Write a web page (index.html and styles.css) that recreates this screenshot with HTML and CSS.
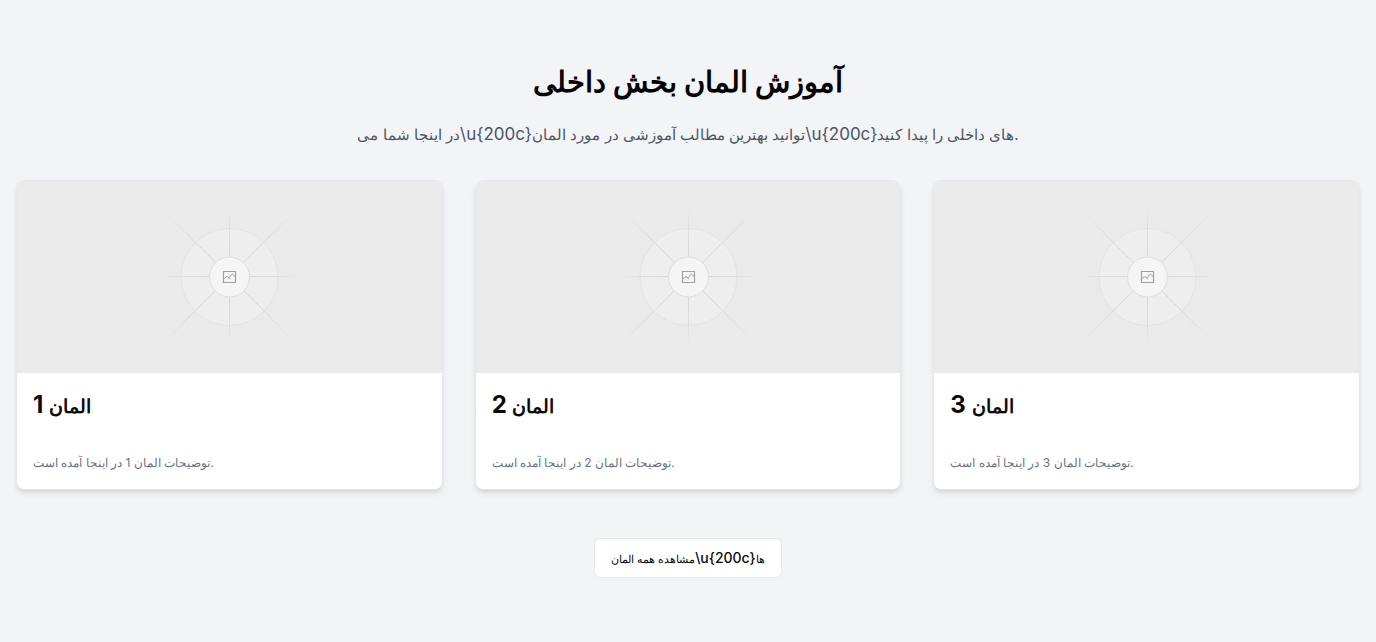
FILE: index.html
```
<!DOCTYPE html>
<html lang="fa" dir="ltr">
<head>
<meta charset="utf-8">
<meta name="viewport" content="width=device-width, initial-scale=1">
<title>آموزش المان بخش داخلی</title>
<link rel="stylesheet" href="styles.css">
</head>
<body>
<svg class="defs" aria-hidden="true">
  <defs>
    <radialGradient id="ray" gradientUnits="userSpaceOnUse" cx="80.5" cy="79.5" r="96">
      <stop offset="0.25" stop-color="#d6d6d6"/>
      <stop offset="0.6" stop-color="#dadada"/>
      <stop offset="1" stop-color="#eaeaea"/>
    </radialGradient>
    <radialGradient id="axis" gradientUnits="userSpaceOnUse" cx="80.5" cy="79.5" r="68">
      <stop offset="0.3" stop-color="#d8d8d8"/>
      <stop offset="0.7" stop-color="#dcdcdc"/>
      <stop offset="1" stop-color="#eaeaea"/>
    </radialGradient>
    <symbol id="placeholder" viewBox="0 0 160 160">
      <circle cx="80.5" cy="80" r="48.5" fill="#eeeeee" stroke="#e3e3e3"/>
      <path d="M80.5 12v135M13 79.5h135" stroke="url(#axis)"/>
      <path d="M17 16l129 129M144 16L15 145" stroke="url(#ray)"/>
      <circle cx="80.5" cy="80" r="20" fill="#f5f5f5" stroke="#dedede"/>
      <g fill="none" stroke="#a0a0a0">
        <path d="M74.5 74.5h12v11h-12z" stroke-width="1.2"/>
        <path d="M74.700 82l2.300-2q1.200-.8 2.200.2l1.800 2.100M79 80.500l1 .3 2.600-3.200q.8-.8 1.600 0l2.300 2.400"/>
      </g>
    </symbol>
  </defs>
</svg>
<section class="section">
  <header class="intro">
    <h2 class="title">آموزش المان بخش داخلی</h2>
    <p class="lead"><span class="lead-fa">در اینجا شما می</span>\u{200c}<span class="lead-fa">توانید بهترین مطالب آموزشی در مورد المان</span>\u{200c}<span class="lead-fa">های داخلی را پیدا کنید.</span></p>
  </header>
  <div class="cards">
    <article class="card">
      <div class="media"><svg class="art" role="img" aria-label="المان 1"><use href="#placeholder"/></svg></div>
      <div class="content">
        <h3 class="name"><span class="name-fa">المان</span> 1</h3>
        <p class="desc">توضیحات المان 1 در اینجا آمده است.</p>
      </div>
    </article>
    <article class="card">
      <div class="media"><svg class="art" role="img" aria-label="المان 2"><use href="#placeholder"/></svg></div>
      <div class="content">
        <h3 class="name"><span class="name-fa">المان</span> 2</h3>
        <p class="desc">توضیحات المان 2 در اینجا آمده است.</p>
      </div>
    </article>
    <article class="card">
      <div class="media"><svg class="art" role="img" aria-label="المان 3"><use href="#placeholder"/></svg></div>
      <div class="content">
        <h3 class="name"><span class="name-fa">المان</span> 3</h3>
        <p class="desc">توضیحات المان 3 در اینجا آمده است.</p>
      </div>
    </article>
  </div>
  <div class="actions">
    <button class="button" type="button"><span class="button-fa">مشاهده همه المان</span>\u{200c}<span class="button-fa">ها</span></button>
  </div>
</section>
</body>
</html>
```
FILE: styles.css
```
*, *::before, *::after { box-sizing: border-box; }
body {
  margin: 0;
  background: #f3f4f6;
  color: #0a0a0a;
  font-family: Inter, "Liberation Sans", Arial, sans-serif;
}
h2, h3, p { margin: 0; }
.defs { position: absolute; width: 0; height: 0; }
.section { padding: 64px 16px; }
.intro {
  display: flex;
  flex-direction: column;
  gap: 20px;
  margin-bottom: 32px;
  text-align: center;
}
.title { font-size: 29px; line-height: 36px; font-weight: 700; color: #000; }
.lead { font-size: 17px; line-height: 28px; color: #4b5563; }
.lead-fa { font-size: 15px; line-height: 1; }
.cards {
  display: grid;
  grid-template-columns: repeat(3, minmax(0, 1fr));
  gap: 32px;
}
.card {
  overflow: hidden;
  border: 1px solid #e5e7eb;
  border-radius: 8px;
  background: #fff;
  box-shadow: 0 4px 6px -1px rgba(0, 0, 0, .1), 0 2px 4px -2px rgba(0, 0, 0, .1);
}
.media {
  display: flex;
  align-items: center;
  justify-content: center;
  height: 192px;
  background: #eaeaea;
}
.art { width: 160px; height: 160px; }
.content {
  display: flex;
  flex-direction: column;
  gap: 32px;
  padding: 16px;
}
.name { font-size: 24px; line-height: 32px; font-weight: 700; }
.name-fa { font-size: 19px; line-height: 1; }
.desc { font-size: 12px; line-height: 20px; color: #6b7280; }
.actions { display: flex; justify-content: center; margin-top: 48px; }
.button {
  height: 40px;
  padding: 0 16px;
  border: 1px solid #e5e7eb;
  border-radius: 6px;
  background: #fff;
  color: #0a0a0a;
  font: 500 14px/20px Inter, "Liberation Sans", Arial, sans-serif;
}
.button-fa { font-size: 11px; line-height: 1; }
```
